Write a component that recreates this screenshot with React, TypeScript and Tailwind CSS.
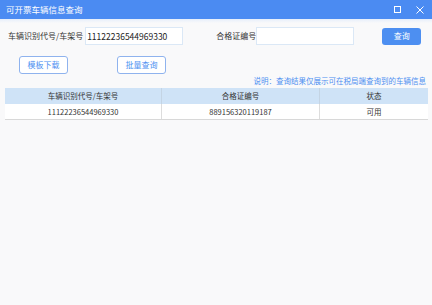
import React from "react";

const font = { fontFamily: '"Microsoft YaHei", "Noto Sans CJK SC", "Liberation Sans", sans-serif' };

const rows = [{ vin: "11122236544969330", cert: "889156320119187", status: "可用" }];

function App() {
  return (
    <div className="w-[432px] h-[305px] bg-[#f9f9fa] flex flex-col overflow-hidden" style={font}>
      {/* title bar */}
      <div className="h-[19px] bg-[#4b8bf2] flex items-center pl-[6px] pr-[8px] text-white">
        <span className="text-[8.5px] leading-none">可开票车辆信息查询</span>
        <div className="ml-auto flex items-center gap-[15px]">
          <div className="w-[7px] h-[7px] border border-white" />
          <svg width="8" height="8" viewBox="0 0 8 8" className="stroke-white">
            <path d="M0.5 0.5 L7.5 7.5 M7.5 0.5 L0.5 7.5" strokeWidth="1" />
          </svg>
        </div>
      </div>
      <div className="h-[4px] bg-gradient-to-b from-[#e6eefb] to-[#f9f9fa]" />

      {/* search form */}
      <div className="flex items-center h-[18px] mt-[4px] pl-[8px] text-[8px] text-[#333]">
        <span>车辆识别代号/车架号</span>
        <div className="ml-[2px] w-[98px] h-[18px] bg-white border border-[#dbe8f6] flex items-center pl-[1px] text-[8.5px] text-[#222]">
          11122236544969330
        </div>
        <span className="ml-[33px]">合格证编号</span>
        <div className="w-[98px] h-[18px] bg-white border border-[#dbe8f6]" />
        <button className="ml-[28px] w-[39px] h-[17px] rounded-[3px] bg-[#4d8ff1] text-white text-[8px]">
          查询
        </button>
      </div>

      <div className="flex mt-[11px] pl-[19px] gap-[49px]">
        <button className="w-[49px] h-[18px] rounded-[3px] border border-[#8fb3ee] bg-white text-[#4d8ff1] text-[8px]">
          模板下载
        </button>
        <button className="w-[49px] h-[18px] rounded-[3px] border border-[#8fb3ee] bg-white text-[#4d8ff1] text-[8px]">
          批量查询
        </button>
      </div>

      <div className="flex justify-end pr-[6px] mt-[1px] h-[12px] items-center text-[7.5px] text-[#4d8ff1]">
        说明：查询结果仅展示可在税局端查询到的车辆信息
      </div>

      {/* table */}
      <div className="mx-[5px] w-[423px] mt-[1px] text-[7.5px] text-[#333]">
        <div className="grid grid-cols-[157px_158px_108px] h-[16px] bg-[#cfe3f7]">
          <div className="flex items-center justify-center border-r border-[#c4d4e4]">车辆识别代号/车架号</div>
          <div className="flex items-center justify-center border-r border-[#c4d4e4]">合格证编号</div>
          <div className="flex items-center justify-center">状态</div>
        </div>
        {rows.map((r, i) => (
          <div
            key={i}
            className="grid grid-cols-[157px_158px_108px] h-[16px] bg-white border-b border-[#d8d8d8]"
          >
            <div className="flex items-center justify-center border-r border-[#dddddd]">{r.vin}</div>
            <div className="flex items-center justify-center border-r border-[#dddddd]">{r.cert}</div>
            <div className="flex items-center justify-center">{r.status}</div>
          </div>
        ))}
      </div>
    </div>
  );
}

export default App;
